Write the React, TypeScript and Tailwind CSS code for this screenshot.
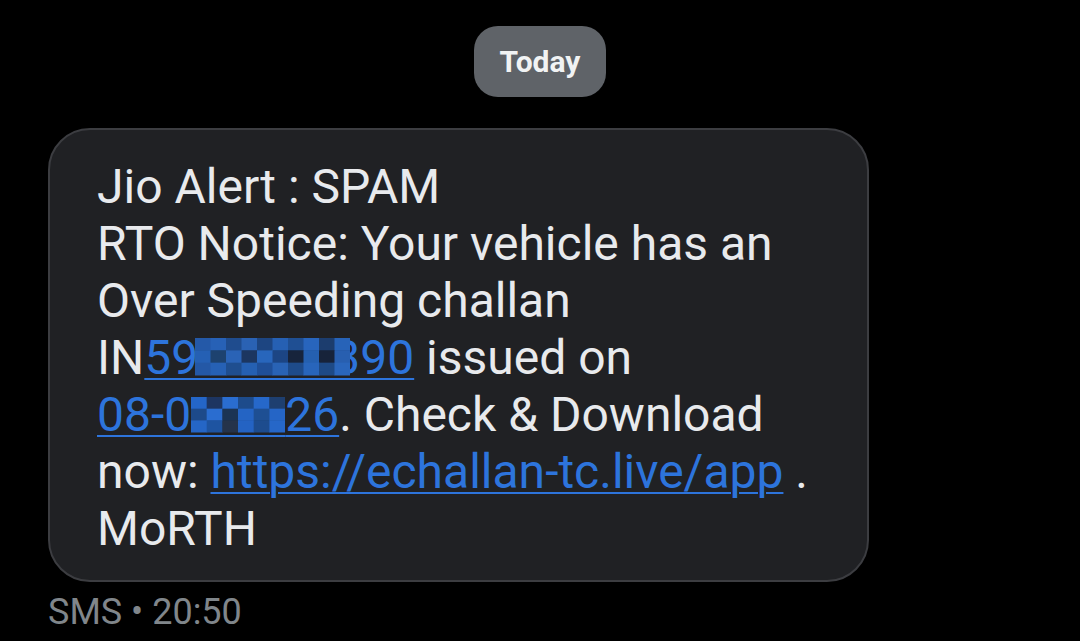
// pixelated (redacted) patches inside the links
const ID_CELLS = [
  "#2459a8", "#2761b6", "#1f4c8e", "#2a62b4", "#1d4581", "#2660b3", "#1f4f93", "#2865bd", "#1c3d6e", "#2763b8",
  "#2560b4", "#1d426f", "#2a63b6", "#1c3660", "#2866bc", "#1c4584", "#17243c", "#2560b0", "#17233a", "#285fb0",
  "#2458a6", "#2661b5", "#1f4e8f", "#2560b2", "#1f4f98", "#2963b5", "#1e4b8a", "#2865bb", "#1e4a86", "#2a66bc",
];

const DATE_CELLS = [
  "#2466c8", "#1d3561", "#2a6dd0", "#1d4b8b", "#2668ca", "#1e3f70",
  "#1d4a8a", "#2a6dd0", "#1b3454", "#2464c4", "#1e4f93", "#2565c6",
  "#2566c6", "#1e54a1", "#25334a", "#2463c3", "#1d4c8e", "#2667c8",
];

function Mosaic({ cells, cols, width, height, className }: { cells: string[]; cols: number; width: number; height: number; className?: string }) {
  const rows = Math.ceil(cells.length / cols);
  const cw = width / cols;
  const ch = height / rows;
  return (
    <svg width={width} height={height + 6} className={`relative z-10 inline-block align-[-7px] ${className ?? ""}`}>
      {cells.map((c, i) => (
        <rect key={i} x={(i % cols) * cw} y={Math.floor(i / cols) * ch} width={cw + 0.5} height={ch + 0.5} fill={c} />
      ))}
      <rect x={0} y={height + 3} width={width} height={2} fill="#2d74dc" />
    </svg>
  );
}

function Link({ children }: { children: React.ReactNode }) {
  return <span className="text-[#2d74dc] underline decoration-[2px] underline-offset-[4px]">{children}</span>;
}

export default function App() {
  return (
    <div className="h-[641px] w-[1080px] overflow-hidden bg-black font-['Roboto',sans-serif]">
      <div className="flex justify-center pt-[26px]">
        <div className="flex h-[71px] w-[132px] items-center justify-center rounded-[24px] bg-[#5f6368] text-[30px] font-bold text-[#f1f3f4]">
          Today
        </div>
      </div>
      <div className="pl-[48px] pt-[31px]">
        <div className="w-[821px] rounded-[42px] border-2 border-[#3c3d41] bg-[#202124] pb-[23px] pl-[47px] pr-[20px] pt-[28px] text-[48px] leading-[57px] text-[#e8eaed]">
          <div>Jio Alert : SPAM</div>
          <div>RTO Notice: Your vehicle has an</div>
          <div>Over Speeding challan</div>
          <div>
            IN
            <Link>
              59
              <Mosaic cells={ID_CELLS} cols={10} width={155} height={37} className="-ml-[3px]" />
              <span className="-ml-[17px]">390</span>
            </Link>{" "}
            issued on
          </div>
          <div>
            <Link>
              08-0
              <Mosaic cells={DATE_CELLS} cols={6} width={94} height={35} />
              26
            </Link>
            . Check &amp; Download
          </div>
          <div>
            now: <Link>https://echallan-tc.live/app</Link> .
          </div>
          <div>MoRTH</div>
        </div>
      </div>
      <div className="pl-[48px] pt-[10px] text-[36px] leading-[40px] text-[#80868b]">SMS • 20:50</div>
    </div>
  );
}
